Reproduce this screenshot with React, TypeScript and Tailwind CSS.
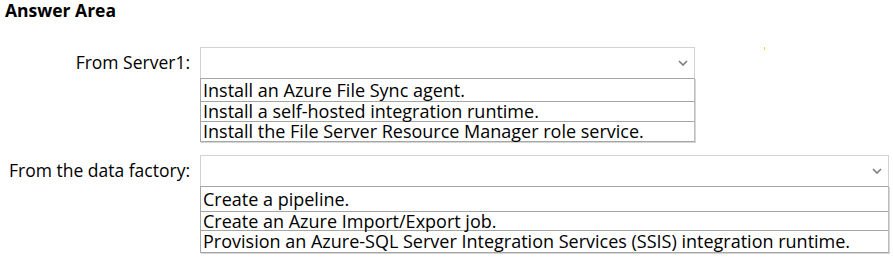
const GROUPS = [
  {
    label: "From Server1:",
    width: "w-[495px]",
    rows: ["h-[22px]", "h-[20px]", "h-[20px]"],
    options: [
      "Install an Azure File Sync agent.",
      "Install a self-hosted integration runtime.",
      "Install the File Server Resource Manager role service.",
    ],
  },
  {
    label: "From the data factory:",
    width: "w-[689px]",
    rows: ["h-[24px]", "h-[19px]", "h-[22px]"],
    options: [
      "Create a pipeline.",
      "Create an Azure Import/Export job.",
      "Provision an Azure-SQL Server Integration Services (SSIS) integration runtime.",
    ],
  },
];

function Chevron() {
  return (
    <svg width="10" height="6" viewBox="0 0 10 6" fill="none">
      <path d="M1 1l4 4 4-4" stroke="#7a7a7a" strokeWidth="1.6" />
    </svg>
  );
}

export default function App() {
  return (
    <div
      className="relative w-[893px] h-[259px] bg-white text-black"
      style={{ fontFamily: '"Open Sans", "Noto Sans", sans-serif' }}
    >
      <div className="pl-[5px] text-[17.5px] font-bold leading-[20px]">Answer Area</div>

      <div className="mt-[27px] flex flex-col gap-[13px]">
        {GROUPS.map((g) => (
          <div key={g.label} className="flex items-start">
            <div className="w-[190px] h-[31px] flex items-center justify-end text-[17.5px] whitespace-nowrap">
              {g.label}
            </div>
            <div className={`ml-[10px] ${g.width}`}>
              <div className="h-[31px] border border-[#d2d2d2] border-b-0 flex items-center justify-end pr-[6px]">
                <Chevron />
              </div>
              <div className="border border-[#a6a6a6] border-r-[#bdbdbd] shadow-[1px_1px_0_#d6d6d6]">
                {g.options.map((o, i) => (
                  <div
                    key={o}
                    className={`${g.rows[i]} flex items-center pl-[2px] text-[18px] leading-[21px] whitespace-nowrap ${
                      i > 0 ? "border-t border-[#a6a6a6]" : ""
                    }`}
                  >
                    {o}
                  </div>
                ))}
              </div>
            </div>
          </div>
        ))}
      </div>

      <div className="absolute left-[764px] top-[47px] w-[1px] h-[3px] bg-[#ffd24a]" />
    </div>
  );
}
